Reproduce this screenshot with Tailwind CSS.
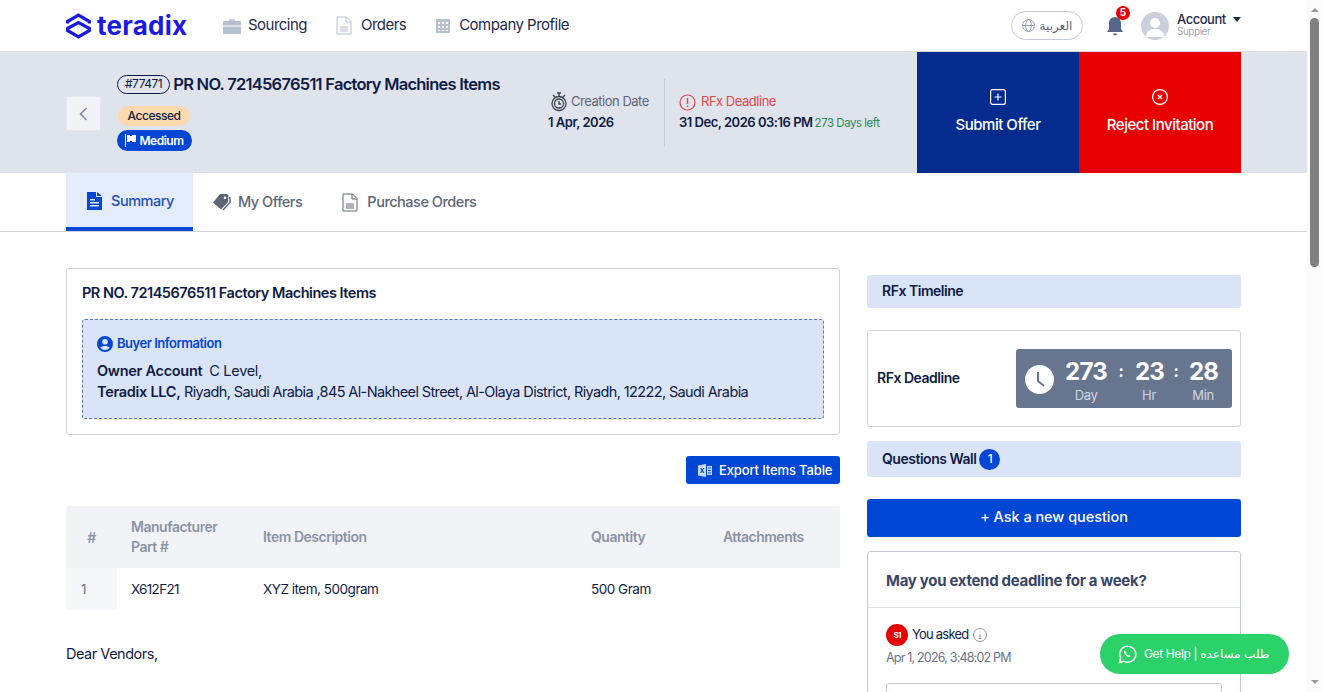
<!DOCTYPE html>
<html lang="en">
  <head>
    <meta charset="UTF-8">
    <title>Teradix</title>
    <script src="https://cdn.jsdelivr.net/npm/@tailwindcss/browser@4"></script>
  </head>
  <body class="bg-white h-[692px] overflow-hidden font-['Inter','DejaVu_Sans',sans-serif] text-[#0e1b45] tracking-[-0.03em]">
    <div class="flex h-[692px]">
      <div class="w-[1307px] shrink-0 h-[692px] overflow-hidden">

        <!-- top nav -->
        <header class="h-[52px] px-[66px] flex items-center border-b border-[#d9dbe0]">
          <svg class="w-[25px] h-[26px] mr-[6px]" viewBox="0 0 25 26" fill="none" stroke="#1a1ae0" stroke-width="3.200" stroke-linejoin="miter">
            <path d="M1.500 10.500V8.500L12.500 2 23.500 8.500V10.500"/>
            <path d="M1.500 15.500 12.500 9.500 23.500 15.500V17.500L12.500 24 1.500 17.500Z"/>
          </svg>
          <span class="text-[26px] font-bold text-[#1a1ae0] tracking-[0.01em] leading-none w-[126px]">teradix</span>
          <nav class="flex items-center text-[15px] text-[#1d2a4d] tracking-[-0.035em]">
            <svg class="w-[18px] h-[16px] mr-[7px]" viewBox="0 0 18 16" fill="#b7c0cf">
              <path d="M6 3V1.500h6V3h5a1 1 0 0 1 1 1v3.500H0V4a1 1 0 0 1 1-1Z"/>
              <path d="M0 8.500h18V15a1 1 0 0 1-1 1H1a1 1 0 0 1-1-1Z"/>
            </svg>
            <span class="mr-[29px]">Sourcing</span>
            <svg class="w-[16px] h-[19px] mr-[9px]" viewBox="0 0 16 19" fill="none" stroke="#b7c0cf">
              <path d="M1 1h9.500L15 5.500V18H1Z"/>
              <path d="M10 1v5h5"/>
              <path d="M4 11h8M4 13h8M4 15h8"/>
            </svg>
            <span class="mr-[30px]">Orders</span>
            <svg class="w-[14px] h-[14px] mr-[9px]" viewBox="0 0 14 14" fill="#b7c0cf">
              <path d="M0 0h14v14H0Z M2 3v2h2V3Zm4 0v2h2V3Zm4 0v2h2V3ZM2 7v2h2V7Zm4 0v2h2V7Zm4 0v2h2V7Zm-8 4v1h2v-1Zm4 0v1h2v-1Zm4 0v1h2v-1Z" fill-rule="evenodd"/>
            </svg>
            <span>Company Profile</span>
          </nav>
          <div class="ml-auto flex items-center">
            <div class="w-[72px] h-[29px] rounded-full border border-[#c4c9d4] flex items-center justify-center gap-[5px] text-[12px] text-[#5d6678] tracking-normal mr-[22px]">
              <svg class="w-[13px] h-[13px]" viewBox="0 0 13 13" fill="none" stroke="#9aa3b3">
                <circle cx="6.500" cy="6.500" r="6"/>
                <ellipse cx="6.500" cy="6.500" rx="2.800" ry="6"/>
                <path d="M.5 6.500h12"/>
              </svg>
              <span>العربية</span>
            </div>
            <div class="relative w-[20px] h-[22px] mr-[16px]">
              <svg class="w-[20px] h-[22px]" viewBox="0 0 20 22" fill="#56668a">
                <path d="M10 2c3.600 0 6 2.800 6 6.200V14l2 3H2l2-3V8.200C4 4.800 6.400 2 10 2Z"/>
                <path d="M8 18.500h4a2 2 0 0 1-4 0Z"/>
              </svg>
              <span class="absolute -top-[9px] right-[-5px] w-[14px] h-[14px] rounded-full bg-[#e60000] text-white text-[10px] font-bold flex items-center justify-center tracking-normal">5</span>
            </div>
            <div class="w-[28px] h-[28px] rounded-full bg-[#c9cfdb] overflow-hidden mr-[8px]">
              <svg class="w-[28px] h-[28px]" viewBox="0 0 28 28" fill="#fff">
                <circle cx="14" cy="11" r="5"/>
                <path d="M5 25c0-6 4-8 9-8s9 2 9 8Z"/>
              </svg>
            </div>
            <div class="w-[64px] leading-none mb-[2px]">
              <div class="flex items-center text-[13px] font-medium text-[#1d2a4d]">Account
                <span class="ml-[7px] w-0 h-0 border-x-[4px] border-x-transparent border-t-[5px] border-t-[#1d2a4d]"></span>
              </div>
              <div class="text-[10px] text-[#a3abb9]">Suppier</div>
            </div>
          </div>
        </header>

        <!-- PR band -->
        <section class="h-[121px] bg-[#dfe3ec] pl-[66px] pr-[66px] flex">
          <div class="w-[51px] flex items-center shrink-0">
            <div class="w-[35px] h-[35px] mt-[2px] bg-[#f1f3f7] border border-[#e4e7ee] rounded-[2px] flex items-center justify-center">
              <svg class="w-[9px] h-[14px]" viewBox="0 0 9 14" fill="none" stroke="#7d8698" stroke-width="1.500"><path d="M7.500 1 1.500 7l6 6"/></svg>
            </div>
          </div>
          <div class="w-[431px] shrink-0 pt-[22px]">
            <div class="flex items-center">
              <span class="h-[19px] px-[7px] mr-[3px] rounded-full border border-[#0e1b45] text-[12px] flex items-center">#77471</span>
              <h1 class="text-[16.500px] font-semibold leading-[20px] tracking-[-0.045em]">PR NO. 72145676511 Factory Machines Items</h1>
            </div>
            <div class="mt-[12px] ml-[1px] w-[72px] h-[20px] rounded-full bg-[#fbd9ae] text-[12px] font-medium flex items-center justify-center">Accessed</div>
            <div class="mt-[4px] w-[75px] h-[21px] rounded-full bg-[#0047d6] text-white text-[12px] font-semibold flex items-center justify-center gap-[3px]">
              <svg class="w-[11px] h-[13px]" viewBox="0 0 11 13" fill="#fff"><path d="M0 0h1v13H0ZM2 1h3v1h2V1h4v7H7V7H5v1H2Z"/></svg>
              Medium
            </div>
          </div>
          <div class="flex-1 flex items-center">
            <div class="w-[116px] shrink-0">
              <div class="flex items-center h-[20px] pb-[2px] text-[13px] text-[#5d6678]">
                <svg class="w-[18px] h-[20px] mr-[3px] ml-[2px] mt-[2px]" viewBox="0 0 18 20" fill="none" stroke="#3a3f4b" stroke-width="1.300">
                  <circle cx="9" cy="11.500" r="7"/><circle cx="9" cy="11.500" r="4.500"/>
                  <path d="M7 1h4M9 1v3M9 9v3h2M3 3l2 2M15 3l-2 2"/>
                </svg>
                Creation Date
              </div>
              <div class="text-[13px] font-semibold mt-[1px]">1 Apr, 2026</div>
            </div>
            <div class="w-px h-[68px] bg-[#c4c9d4] mr-[14px]"></div>
            <div>
              <div class="flex items-center h-[20px] pb-[2px] text-[13px] text-[#e5484d]">
                <svg class="w-[17px] h-[17px] mr-[5px] mt-[2px]" viewBox="0 0 17 17" fill="none" stroke="#e5484d" stroke-width="1.200">
                  <circle cx="8.500" cy="8.500" r="7.500"/><path d="M8.500 4v6M8.500 11.500v1.500" stroke-width="1.500"/>
                </svg>
                RFx Deadline
              </div>
              <div class="mt-[1px] flex items-baseline">
                <span class="text-[13px] font-semibold">31 Dec, 2026 03:16 PM</span>
                <span class="text-[11.500px] text-[#2e8b57] ml-[2px]">273 Days left</span>
              </div>
            </div>
          </div>
          <div class="w-[162px] bg-[#032c8e] text-white flex flex-col items-center shrink-0">
            <svg class="w-[16px] h-[16px] mt-[37px]" viewBox="0 0 16 16" fill="none" stroke="#fff" stroke-width="1.200">
              <rect x=".6" y=".6" width="14.800" height="14.800" rx="2"/><path d="M8 4.500v7M4.500 8h7"/>
            </svg>
            <div class="text-[15px] font-medium mt-[9px]">Submit Offer</div>
          </div>
          <div class="w-[162px] bg-[#e80000] text-white flex flex-col items-center shrink-0">
            <svg class="w-[16px] h-[16px] mt-[37px]" viewBox="0 0 16 16" fill="none" stroke="#fff" stroke-width="1.200">
              <circle cx="8" cy="8" r="7.400"/><path d="M6 6l4 4M10 6l-4 4"/>
            </svg>
            <div class="text-[15px] font-medium mt-[9px]">Reject Invitation</div>
          </div>
        </section>

        <!-- tabs -->
        <div class="h-[59px] px-[66px] flex border-b border-[#d0d3da] text-[14.500px] font-medium text-[#5d6678]">
          <div class="w-[127px] bg-[#e4ecfb] border-b-[4px] border-[#0047d6] flex items-center pl-[21px] pt-[2px] text-[#2450b8] h-[58px]">
            <svg class="w-[15px] h-[18px] mr-[9px]" viewBox="0 0 15 18" fill="#0047d6">
              <path d="M0 0h9v5h6v13H0Zm10 0 5 4h-5ZM3 7v1.500h5V7Zm0 3v1.500h9V10Zm0 3v1.500h9V13Z" fill-rule="evenodd"/>
            </svg>
            Summary
          </div>
          <div class="flex items-center ml-[20px] mr-[40px]">
            <svg class="w-[19px] h-[17px] mr-[6px]" viewBox="0 0 19 17" fill="#5d6678">
              <path d="M7 0h7l1.500 1.500-.5 6.500-7 7.500L0 8.500Zm5 2.500a1.300 1.300 0 1 0 0 2.600 1.300 1.300 0 0 0 0-2.600Z" fill-rule="evenodd"/>
              <path d="M17.500 3 18 8.500 10.500 16.500 9.500 15.500 16.500 8 16 3Z"/>
            </svg>
            My Offers
          </div>
          <div class="flex items-center">
            <svg class="w-[16px] h-[19px] mr-[9px]" viewBox="0 0 16 19" fill="none" stroke="#5d6678">
              <path d="M1 1h9.500L15 5.500V18H1Z"/><path d="M10 1v5h5"/><path d="M4 11h8M4 13h8M4 15h8"/>
            </svg>
            Purchase Orders
          </div>
        </div>

        <!-- content -->
        <main class="px-[66px] flex gap-[27px]">
          <div class="w-[774px] shrink-0 pt-[36px]">
            <div class="h-[167px] border border-[#d0d3da] rounded-[3px] px-[15px] pt-[14px]">
              <h2 class="text-[14.500px] font-semibold leading-[20px]">PR NO. 72145676511 Factory Machines Items</h2>
              <div class="mt-[16px] h-[100px] border border-dashed border-[#5b7bb8] rounded-[3px] bg-[#dae4f8] px-[14px] pt-[14px]">
                <div class="flex items-center text-[#0047d6] text-[13px] font-semibold h-[20px]">
                  <svg class="w-[16px] h-[16px] mr-[4px]" viewBox="0 0 16 16" fill="#0047d6">
                    <path d="M8 0a8 8 0 1 0 0 16A8 8 0 0 0 8 0Zm0 3a2.800 2.800 0 1 1 0 5.600A2.800 2.800 0 0 1 8 3Zm0 11a6 6 0 0 1-4.700-2.300C4 10.500 6 10 8 10s4 .5 4.700 1.700A6 6 0 0 1 8 14Z"/>
                  </svg>
                  Buyer Information
                </div>
                <div class="text-[14.500px] leading-[21px] mt-[6px] tracking-[-0.043em]">
                  <div><b class="font-semibold tracking-[-0.02em]">Owner Account</b>&nbsp; <span class="tracking-[-0.02em]">C Level,</span></div>
                  <div><b class="font-semibold tracking-[-0.02em]">Teradix LLC,</b> Riyadh, Saudi Arabia ,845 Al-Nakheel Street, Al-Olaya District, Riyadh, 12222, Saudi Arabia</div>
                </div>
              </div>
            </div>
            <div class="flex justify-end mt-[21px]">
              <div class="w-[154px] h-[28px] bg-[#0047d6] rounded-[3px] text-white text-[13px] font-medium flex items-center pl-[12px] gap-[7px] tracking-[-0.01em]">
                <svg class="w-[14px] h-[13px]" viewBox="0 0 14 13" fill="#c9d8f7">
                  <path d="M0 1.500 8 0v13L0 11.500Zm2 2.500 1.500 2.500L2 9h1.200l1-1.500 1 1.500h1.200L4.800 6.500 6.400 4H5.200l-1 1.500-1-1.500Z" fill-rule="evenodd"/>
                  <path d="M9 2h5v9H9Zm1 1.500v1h3v-1Zm0 2.500v1h3V6Zm0 2.500v1h3v-1Z" fill-rule="evenodd"/>
                </svg>
                <span class="pt-[1px]">Export Items Table</span>
              </div>
            </div>
            <table class="w-full mt-[22px] text-[14px] border-collapse table-fixed">
              <thead class="bg-[#f1f3f7] text-[#8b93a6] font-semibold">
                <tr class="h-[62px]">
                  <th class="w-[51px] font-semibold text-center">#</th>
                  <th class="w-[14px]"></th>
                  <th class="w-[132px] font-semibold text-left leading-[20px]">Manufacturer<br>Part #</th>
                  <th class="w-[328px] font-semibold text-left pb-[1px]">Item Description</th>
                  <th class="w-[132px] font-semibold text-left pb-[1px]">Quantity</th>
                  <th class="font-semibold text-left pb-[1px]">Attachments</th>
                </tr>
              </thead>
              <tbody class="text-[13.500px]">
                <tr class="h-[42px]">
                  <td class="bg-[#f6f7fa] text-[#6b7488] pl-[15px]">1</td>
                  <td></td>
                  <td class="tracking-[-0.05em]">X612F21</td>
                  <td>XYZ item, 500gram</td>
                  <td>500 Gram</td>
                  <td></td>
                </tr>
              </tbody>
            </table>
            <p class="mt-[34px] text-[14.500px] leading-[20px]">Dear Vendors,</p>
          </div>

          <aside class="w-[374px] shrink-0 pt-[43px]">
            <div class="h-[33px] pb-[2px] bg-[#dae4f8] rounded-[3px] pl-[15px] flex items-center text-[14px] font-semibold">RFx Timeline</div>
            <div class="mt-[22px] h-[97px] border border-[#d0d3da] rounded-[3px] pl-[9px] pr-[8px] flex items-center justify-between">
              <span class="text-[14px] font-semibold mb-[2px]">RFx Deadline</span>
              <div class="w-[216px] h-[59px] bg-[#67758f] rounded-[3px] text-white flex items-center pl-[9px]">
                <svg class="w-[29px] h-[29px] mr-[11px] mt-[2px]" viewBox="0 0 29 29">
                  <circle cx="14.500" cy="14.500" r="14.500" fill="#fff"/>
                  <path d="M13 7v9l6 5" fill="none" stroke="#67758f" stroke-width="2"/>
                </svg>
                <div class="w-[42px] text-center pt-[7px] tracking-[-0.05em]">
                  <div class="text-[24px] font-bold leading-[26px]">273</div>
                  <div class="text-[13px] text-[#cfd5e0] leading-[20px] tracking-[-0.03em]">Day</div>
                </div>
                <div class="w-[26px] text-center text-[16px] font-bold leading-none mb-[16px] ml-[1px]">:</div>
                <div class="w-[28px] ml-[1px] text-center pt-[7px] tracking-[-0.05em]">
                  <div class="text-[24px] font-bold leading-[26px]">23</div>
                  <div class="text-[13px] text-[#cfd5e0] leading-[20px] tracking-[-0.03em]">Hr</div>
                </div>
                <div class="w-[26px] text-center text-[16px] font-bold leading-none mb-[16px]">:</div>
                <div class="w-[28px] text-center pt-[7px] tracking-[-0.05em]">
                  <div class="text-[24px] font-bold leading-[26px]">28</div>
                  <div class="text-[13px] text-[#cfd5e0] leading-[20px] tracking-[-0.03em]">Min</div>
                </div>
              </div>
            </div>
            <div class="mt-[14px] h-[36px] bg-[#dae4f8] rounded-[3px] pl-[15px] flex items-center text-[14px] font-semibold">
              <span class="mb-[2px]">Questions Wall</span>
              <span class="ml-[3px] w-[21px] h-[21px] rounded-full bg-[#0047d6] text-white text-[12px] font-medium flex items-center justify-center">1</span>
            </div>
            <div class="mt-[22px] h-[38px] pb-[2px] bg-[#0047d6] rounded-[3px] text-white text-[14.500px] font-medium flex items-center justify-center tracking-[-0.003em]">+ Ask a new question</div>
            <div class="mt-[14px] h-[200px] border border-[#c4c9d4] rounded-[3px]">
              <div class="h-[56px] pt-[3px] px-[18px] flex items-center border-b border-[#dfe1e6] text-[15px] font-bold text-[#3a4668] tracking-[-0.02em]">May you extend deadline for a week?</div>
              <div class="px-[18px] pt-[16px]">
                <div class="flex items-center text-[13px] h-[22px] tracking-[-0.06em]">
                  <span class="w-[22px] h-[22px] rounded-full bg-[#e60000] text-white text-[8px] font-bold flex items-center justify-center mr-[4px]">S1</span>
                  You asked
                  <svg class="w-[14px] h-[14px] ml-[4px]" viewBox="0 0 14 14" fill="none" stroke="#8b93a6">
                    <circle cx="7" cy="7" r="6.500"/><path d="M7 6v4.500M5.500 10.500h3M7 3.500v1"/>
                  </svg>
                </div>
                <div class="text-[12.500px] tracking-[-0.065em] text-[#6b7488] mt-[3px] leading-[18px]">Apr 1, 2026, 3:48:02 PM</div>
                <div class="mt-[16px] h-[40px] border border-[#c4c9d4] rounded-[3px]"></div>
              </div>
            </div>
          </aside>
        </main>
      </div>

      <!-- scrollbar -->
      <div class="w-[15px] shrink-0 h-[692px] bg-[#fafafa] flex flex-col items-center">
        <span class="mt-[8px] w-0 h-0 border-x-[4px] border-x-transparent border-b-[4px] border-b-[#9a9a9a]"></span>
        <span class="mt-[6px] w-[9px] h-[249px] rounded-full bg-[#808080]"></span>
        <span class="mt-auto mb-[8px] w-0 h-0 border-x-[4px] border-x-transparent border-t-[4px] border-t-[#9a9a9a]"></span>
      </div>
    </div>

    <!-- help button floats over the page -->
    <div class="fixed left-[1100px] top-[634px] w-[189px] h-[40px] rounded-full bg-[#2bd26a] text-white text-[12px] flex items-center pl-[18px] gap-[7px] tracking-[-0.03em]">
      <svg class="w-[19px] h-[19px]" viewBox="0 0 19 19" fill="none" stroke="#fff" stroke-width="1.500">
        <path d="M1.500 17.500 2.700 13A8 8 0 1 1 6 16.300Z"/>
        <path d="M6.500 5.500c-1 1-.5 3 1.200 4.800s3.800 2.300 4.800 1.300l-.8-1.500-1.400.5c-.8-.3-2-1.500-2.300-2.300l.5-1.400Z" fill="#fff" stroke="none"/>
      </svg>
      <span>Get Help | طلب مساعده</span>
    </div>
  </body>
</html>
